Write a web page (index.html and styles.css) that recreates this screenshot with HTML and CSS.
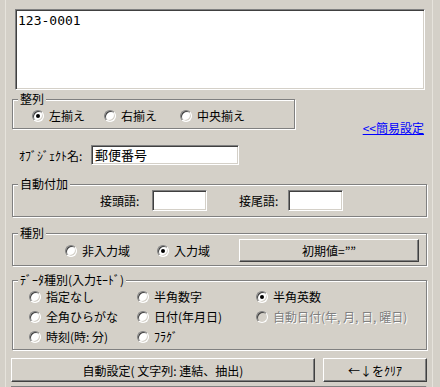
FILE: index.html
```html
<!DOCTYPE html>
<html>
<head>
  <meta charset="utf-8">
  <title>オブジェクト設定</title>
  <link rel="stylesheet" href="styles.css">
</head>
<body>
  <div class="dialog">
    <div class="memo">123-0001</div>

    <div class="align-row">
      <fieldset class="group align-group">
        <legend>整列</legend>
        <div class="radios">
          <span class="opt w72"><i class="radio on"></i>左揃え</span>
          <span class="opt w76"><i class="radio"></i>右揃え</span>
          <span class="opt"><i class="radio"></i>中央揃え</span>
        </div>
      </fieldset>
      <a class="simple-link" href="#">&lt;&lt;簡易設定</a>
    </div>

    <div class="name-row">
      <span class="name-label">ｵﾌﾞｼﾞｪｸﾄ名:</span>
      <span class="field name-field">郵便番号</span>
    </div>

    <fieldset class="group wide">
      <legend>自動付加</legend>
      <div class="affix">
        <span class="affix-label pre">接頭語:</span>
        <span class="field affix-field"></span>
        <span class="affix-label post">接尾語:</span>
        <span class="field affix-field"></span>
      </div>
    </fieldset>

    <fieldset class="group wide kind">
      <legend>種別</legend>
      <div class="kind-row">
        <span class="opt w92"><i class="radio"></i>非入力域</span>
        <span class="opt w82"><i class="radio on"></i>入力域</span>
        <span class="btn init-btn">初期値=””</span>
      </div>
    </fieldset>

    <fieldset class="group wide">
      <legend>ﾃﾞｰﾀ種別(入力ﾓｰﾄﾞ)</legend>
      <div class="modes">
        <span class="opt"><i class="radio"></i>指定なし</span>
        <span class="opt"><i class="radio"></i>半角数字</span>
        <span class="opt"><i class="radio on"></i>半角英数</span>
        <span class="opt"><i class="radio"></i>全角ひらがな</span>
        <span class="opt"><i class="radio"></i>日付(年月日)</span>
        <span class="opt disabled"><i class="radio"></i>自動日付(年, 月, 日, 曜日)</span>
        <span class="opt"><i class="radio"></i>時刻(時: 分)</span>
        <span class="opt"><i class="radio"></i>ﾌﾗｸﾞ</span>
      </div>
    </fieldset>

    <div class="bottom-buttons">
      <span class="btn auto-btn">自動設定( 文字列: 連結、抽出)</span>
      <span class="btn clear-btn">←↓をｸﾘｱ</span>
    </div>

    <div class="next-box"></div>
  </div>
</body>
</html>
```

FILE: styles.css
```css
html, body {
  margin: 0;
  padding: 0;
}

body {
  font-family: "Noto Sans CJK JP", "Liberation Sans", sans-serif;
  font-size: 12px;
  color: #000;
  background-color: #d4d0c8;
}

.dialog {
  width: 440px;
  height: 387px;
  overflow: hidden;
  background:
    linear-gradient(to right, transparent 5px, #e6e3dc 5px, #e6e3dc 6px, transparent 6px),
    linear-gradient(to left, transparent 7px, #e6e3dc 7px, #e6e3dc 8px, transparent 8px);
}

/* sunken boxes */
.memo, .field, .next-box {
  box-sizing: border-box;
  background-color: #fff;
  border: 1px solid;
  border-color: #808080 #fff #fff #808080;
  box-shadow: inset 1px 1px 0 #404040, inset -1px -1px 0 #d4d0c8;
}

.memo {
  margin: 9px 0 0 15px;
  width: 410px;
  height: 81px;
  padding: 3px 2px;
  font-family: "DejaVu Sans Mono", "Liberation Mono", monospace;
  font-size: 13px;
  line-height: 15px;
}

/* group boxes */
.group {
  box-sizing: border-box;
  margin: 0 0 0 12px;
  padding: 0;
  min-inline-size: 0;
  border: 1px solid #808080;
  box-shadow: inset 1px 1px 0 #fff, 1px 1px 0 #fff;
}

.group legend {
  margin-left: 5px;
  padding: 0 2px;
  height: 12px;
  line-height: 12px;
  background-color: #d4d0c8;
}

.wide {
  width: 415px;
}

/* radios */
.opt {
  display: inline-flex;
  align-items: center;
  height: 20px;
  line-height: 14px;
  white-space: nowrap;
}

.radio {
  position: relative;
  box-sizing: border-box;
  width: 12px;
  height: 12px;
  margin-right: 5px;
  border-radius: 50%;
  border: 1px solid;
  border-color: #808080 #fff #fff #808080;
  box-shadow: inset 1px 1px 0 #404040, inset -1px -1px 0 #d4d0c8;
  background-color: #fff;
  flex: none;
}

.radio.on::after {
  content: "";
  position: absolute;
  left: 3px;
  top: 3px;
  width: 4px;
  height: 4px;
  border-radius: 50%;
  background-color: #000;
}

.disabled {
  color: #808080;
  text-shadow: 1px 1px 0 #fff;
}

.disabled .radio {
  background-color: #d4d0c8;
}

.w72 { width: 72px; }
.w76 { width: 76px; }
.w82 { width: 82px; }
.w92 { width: 92px; }

/* 整列 */
.align-row {
  display: flex;
  align-items: flex-end;
  justify-content: space-between;
  width: 424px;
  margin-top: 3px;
}

.align-group {
  width: 283px;
}

.radios {
  display: flex;
  padding: 1px 0 2px 19px;
}

.simple-link {
  margin-bottom: -6px;
  color: #0000ff;
  line-height: 14px;
  text-decoration: underline;
}

/* オブジェクト名 */
.name-row {
  display: flex;
  align-items: center;
  margin: 16px 0 0 19px;
}

.name-label {
  width: 72px;
}

.name-field {
  width: 148px;
  height: 20px;
  padding: 0 3px;
  font-size: 13px;
  line-height: 18px;
}

/* 自動付加 */
.group + .group, .name-row + .group {
  margin-top: 13px;
}

.affix {
  display: flex;
  align-items: center;
  padding: 0 0 5px 87px;
}

.affix-label.pre {
  width: 52px;
}

.affix-label.post {
  width: 49px;
  margin-left: 32px;
}

.affix-field {
  width: 55px;
  height: 21px;
}

/* 種別 */
.group.kind {
  margin-top: 10px;
}

.kind-row {
  display: flex;
  align-items: center;
  padding: 0 0 3px 52px;
  height: 23px;
}

/* buttons */
.btn {
  box-sizing: border-box;
  display: inline-flex;
  align-items: center;
  justify-content: center;
  background-color: #d4d0c8;
  border: 1px solid;
  border-color: #fff #404040 #404040 #fff;
  box-shadow: inset -1px -1px 0 #808080;
}

.init-btn {
  width: 180px;
  height: 23px;
}

/* データ種別 */
.kind + .group {
  margin-top: 8px;
}

.modes {
  display: grid;
  grid-template-columns: 108px 119px auto;
  grid-auto-rows: 20px;
  padding: 1px 0 2px 16px;
}

.bottom-buttons {
  display: flex;
  gap: 8px;
  margin: 8px 0 0 11px;
}

.auto-btn {
  width: 304px;
  height: 24px;
}

.clear-btn {
  width: 104px;
  height: 24px;
}

.next-box {
  margin: 4px 0 0 11px;
  width: 416px;
  height: 30px;
  background-color: #d4d0c8;
}
```
